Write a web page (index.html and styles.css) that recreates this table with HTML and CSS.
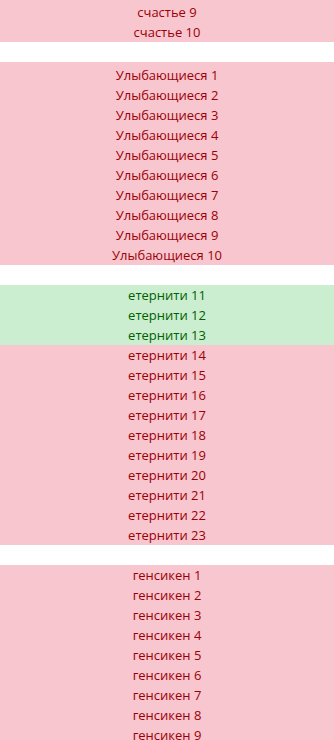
FILE: index.html
```html
<!DOCTYPE html>
<html lang="ru">
<head>
  <meta charset="UTF-8">
  <meta name="viewport" content="width=device-width, initial-scale=1.0">
  <title>Список</title>
  <link rel="stylesheet" href="styles.css">
</head>
<body>

<div class="sheet">

  <div class="block first">
    <div class="cell bad">счастье 9</div>
    <div class="cell bad">счастье 10</div>
  </div>

  <div class="block tall">
    <div class="cell bad">Улыбающиеся 1</div>
    <div class="cell bad">Улыбающиеся 2</div>
    <div class="cell bad">Улыбающиеся 3</div>
    <div class="cell bad">Улыбающиеся 4</div>
    <div class="cell bad">Улыбающиеся 5</div>
    <div class="cell bad">Улыбающиеся 6</div>
    <div class="cell bad">Улыбающиеся 7</div>
    <div class="cell bad">Улыбающиеся 8</div>
    <div class="cell bad">Улыбающиеся 9</div>
    <div class="cell bad">Улыбающиеся 10</div>
  </div>

  <div class="block">
    <div class="cell good">етернити 11</div>
    <div class="cell good">етернити 12</div>
    <div class="cell good">етернити 13</div>
    <div class="cell bad">етернити 14</div>
    <div class="cell bad">етернити 15</div>
    <div class="cell bad">етернити 16</div>
    <div class="cell bad">етернити 17</div>
    <div class="cell bad">етернити 18</div>
    <div class="cell bad">етернити 19</div>
    <div class="cell bad">етернити 20</div>
    <div class="cell bad">етернити 21</div>
    <div class="cell bad">етернити 22</div>
    <div class="cell bad">етернити 23</div>
  </div>

  <div class="block">
    <div class="cell bad">генсикен 1</div>
    <div class="cell bad">генсикен 2</div>
    <div class="cell bad">генсикен 3</div>
    <div class="cell bad">генсикен 4</div>
    <div class="cell bad">генсикен 5</div>
    <div class="cell bad">генсикен 6</div>
    <div class="cell bad">генсикен 7</div>
    <div class="cell bad">генсикен 8</div>
    <div class="cell bad">генсикен 9</div>
  </div>

</div>

</body>
</html>
```

FILE: styles.css
```css
body {
  margin: 0;
  background-color: #fff;
  font-family: "Open Sans", "Liberation Sans", sans-serif;
  font-size: 13px;
  overflow: hidden;
}

.sheet {
  display: flex;
  flex-direction: column;
  gap: 20px;
}

.block {
  display: flex;
  flex-direction: column;
  background-color: #f8c6ce;
}

.first {
  padding-top: 2px;
}

.tall {
  padding-top: 3px;
}

.cell {
  height: 20px;
  line-height: 21px;
  text-align: center;
}

.bad {
  background-color: #f8c6ce;
  color: #9c0006;
}

.good {
  background-color: #caeecf;
  color: #006100;
}
```
